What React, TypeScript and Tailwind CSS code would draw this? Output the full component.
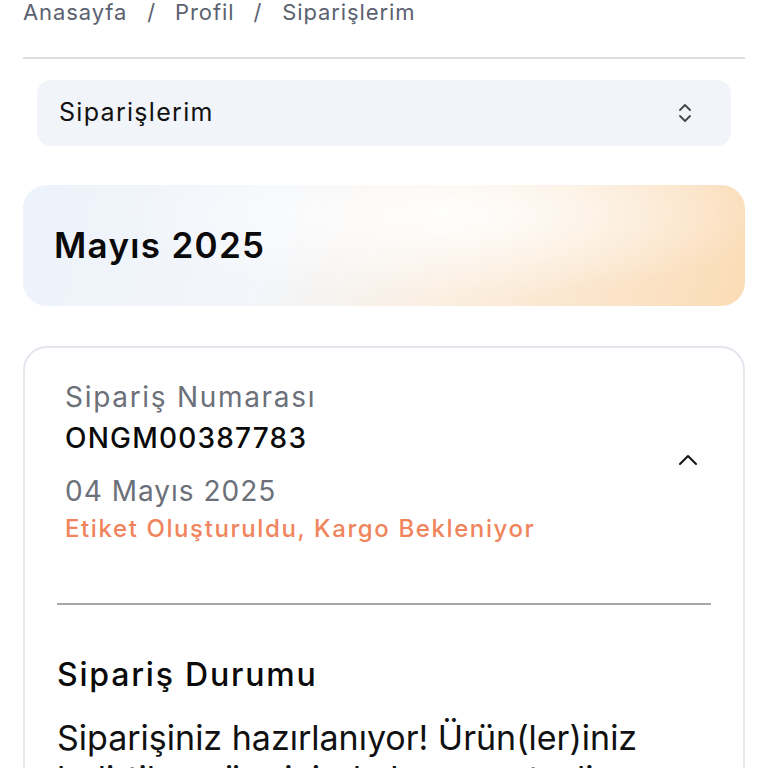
import React from "react";

export default function App() {
  return (
    <div className="w-[768px] h-[768px] overflow-hidden bg-white font-[Inter,'Noto_Sans',sans-serif]">
      <div className="px-[23px]">
        <div className="h-[59px] border-b-2 border-[#dcdfe3] flex items-start">
          <div className="flex items-center text-[22px] leading-[24px] tracking-[0.9px] text-[#5b6270]">
            <span>Anasayfa</span>
            <span className="ml-[20px]">/</span>
            <span className="ml-[19px]">Profil</span>
            <span className="ml-[19px]">/</span>
            <span className="ml-[20px]">Siparişlerim</span>
          </div>
        </div>
        <div className="px-[14px] pt-[21px]">
          <div className="h-[66px] rounded-[14px] bg-[#f1f4f8] flex items-center justify-between pl-[22px] pr-[38px]">
            <span className="text-[25px] tracking-[1.3px] text-[#111]">Siparişlerim</span>
            <svg width="16" height="22" viewBox="0 0 16 22" fill="none" stroke="#444" strokeWidth="1.8" strokeLinecap="round" strokeLinejoin="round">
              <path d="M3 8 L8 3 L13 8" />
              <path d="M3 14 L8 19 L13 14" />
            </svg>
          </div>
        </div>
        <div className="mt-[39px] h-[121px] rounded-[24px] flex items-center pl-[31px] bg-[radial-gradient(ellipse_45%_70%_at_58%_25%,rgba(255,255,255,0.95),rgba(255,255,255,0)_100%),linear-gradient(105deg,#edf3fb_0%,#f3f6fa_35%,#fbeee0_60%,#fbdcb6_100%)]">
          <span className="text-[35px] font-semibold text-[#0a0a0a] tracking-[1.3px]">Mayıs 2025</span>
        </div>
        <div className="mt-[40px] rounded-[24px] border-2 border-[#e3e7ed] px-[32px] pt-[29px] pb-[40px]">
          <div className="flex items-center justify-between pl-[8px] pr-[12px]">
            <div className="flex flex-col">
              <span className="text-[28px] leading-[40px] tracking-[1.7px] text-[#6b7079]">Sipariş Numarası</span>
              <span className="text-[28px] leading-[40px] tracking-[1.2px] font-medium text-[#0a0a0a] mt-[1px]">ONGM00387783</span>
              <span className="text-[28px] leading-[40px] tracking-[1px] text-[#6b7079] mt-[13px]">04 Mayıs 2025</span>
              <span className="text-[24px] leading-[36px] tracking-[1.6px] font-medium text-[#f0845c]">Etiket Oluşturuldu, Kargo Bekleniyor</span>
            </div>
            <svg width="22" height="14" viewBox="0 0 22 14" fill="none" stroke="#111" strokeWidth="2" strokeLinecap="round" strokeLinejoin="round" className="-mt-[5px]">
              <path d="M3 11 L11 3 L19 11" />
            </svg>
          </div>
          <div className="mt-[56px] h-[2px] bg-[#a3a6ab]" />
          <div className="mt-[46px] text-[32px] tracking-[1.8px] font-medium text-[#0a0a0a]">Sipariş Durumu</div>
          <p className="mt-[18px] text-[34px] leading-[41px] tracking-[0px] text-[#111]">
            Siparişiniz hazırlanıyor! Ürün(ler)iniz belirtilen süre içinde kargoya teslim edilecektir.
          </p>
        </div>
      </div>
    </div>
  );
}
